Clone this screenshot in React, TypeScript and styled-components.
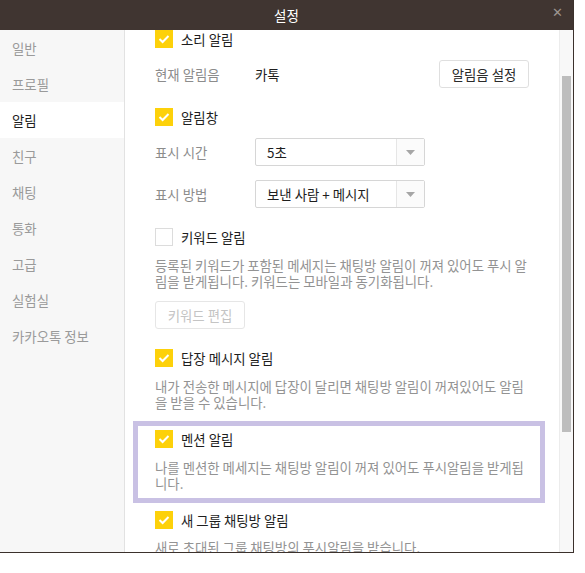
import styled, { createGlobalStyle } from 'styled-components';

const GlobalStyle = createGlobalStyle`
    html, body {
        margin: 0;
        background: #ffffff;
    }
    body {
        font-family: 'Noto Sans CJK KR', 'Noto Sans', sans-serif;
        font-size: 13.4px;
        color: #222;
    }
    * {
        box-sizing: border-box;
    }
`;

const MENU = ['일반', '프로필', '알림', '친구', '채팅', '통화', '고급', '실험실', '카카오톡 정보'];

function CheckIcon() {
    return (
        <svg width="12" height="10" viewBox="0 0 12 10">
            <polyline points="1.5,5 4.6,8 10.5,2" fill="none" stroke="#fff" strokeWidth="2" />
        </svg>
    );
}

function Caret() {
    return (
        <svg width="9" height="5" viewBox="0 0 9 5">
            <polygon points="0,0 9,0 4.5,5" fill="#a6a6a6" />
        </svg>
    );
}

function CheckRow({ checked, label }: { checked: boolean; label: string }) {
    return (
        <CheckLine>
            <Box checked={checked}>{checked && <CheckIcon />}</Box>
            <CheckLabel>{label}</CheckLabel>
        </CheckLine>
    );
}

function Select({ value }: { value: string }) {
    return (
        <SelectBox>
            <SelectValue>{value}</SelectValue>
            <SelectArrow>
                <Caret />
            </SelectArrow>
        </SelectBox>
    );
}

export default function App() {
    const active = '알림';

    return (
        <>
            <GlobalStyle />
            <Window>
                <TitleBar>
                    <Title>설정</Title>
                    <Close>✕</Close>
                </TitleBar>
                <Body>
                    <Sidebar>
                        {MENU.map(m => (
                            <MenuItem key={m} active={m === active}>
                                {m}
                            </MenuItem>
                        ))}
                    </Sidebar>
                    <Content>
                        <Inner>
                            <Section>
                                <CheckRow checked label="소리 알림" />
                                <FieldRow>
                                    <FieldLabel>현재 알림음</FieldLabel>
                                    <FieldValue>카톡</FieldValue>
                                    <Button>알림음 설정</Button>
                                </FieldRow>
                            </Section>

                            <Section>
                                <CheckRow checked label="알림창" />
                                <FieldRow>
                                    <FieldLabel>표시 시간</FieldLabel>
                                    <Select value="5초" />
                                </FieldRow>
                                <FieldRow spaced>
                                    <FieldLabel>표시 방법</FieldLabel>
                                    <Select value="보낸 사람 + 메시지" />
                                </FieldRow>
                            </Section>

                            <Section>
                                <CheckRow checked={false} label="키워드 알림" />
                                <Description>
                                    등록된 키워드가 포함된 메세지는 채팅방 알림이 꺼져 있어도 푸시 알림을 받게됩니다. 키워드는 모바일과 동기화됩니다.
                                </Description>
                                <ButtonRow>
                                    <Button disabled>키워드 편집</Button>
                                </ButtonRow>
                            </Section>

                            <Section>
                                <CheckRow checked label="답장 메시지 알림" />
                                <Description>
                                    내가 전송한 메시지에 답장이 달리면 채팅방 알림이 꺼져있어도 알림을 받을 수 있습니다.
                                </Description>
                            </Section>

                            <Section highlighted>
                                <CheckRow checked label="멘션 알림" />
                                <Description>
                                    나를 멘션한 메세지는 채팅방 알림이 꺼져 있어도 푸시알림을 받게됩니다.
                                </Description>
                            </Section>

                            <Section>
                                <CheckRow checked label="새 그룹 채팅방 알림" />
                                <Description tight>새로 초대된 그룹 채팅방의 푸시알림을 받습니다.</Description>
                            </Section>
                        </Inner>
                    </Content>
                    <Track>
                        <Thumb />
                    </Track>
                </Body>
            </Window>
        </>
    );
}

// Styled components
const Window = styled.div`
    width: 574px;
    height: 553px;
    display: flex;
    flex-direction: column;
    border-right: 1px solid #3b312c;
    border-bottom: 1px solid #3b312c;
    box-shadow: 0 2px 0 #e4e4e4;
    background: #fff;
`;

const TitleBar = styled.div`
    height: 30px;
    flex: none;
    background: #403531;
    display: flex;
    align-items: center;
    justify-content: center;
    position: relative;
`;

const Title = styled.div`
    color: #fff;
    font-size: 13.5px;
`;

const Close = styled.div`
    position: absolute;
    right: 10px;
    top: 5px;
    color: #9c948f;
    font-size: 13px;
    font-weight: bold;
    font-family: 'DejaVu Sans', sans-serif;
`;

const Body = styled.div`
    flex: 1;
    display: flex;
    min-height: 0;
`;

const Sidebar = styled.div`
    width: 125px;
    flex: none;
    background: #f7f7f7;
    border-right: 1px solid #e2e2e2;
`;

const MenuItem = styled.div<{ active?: boolean }>`
    height: 36px;
    display: flex;
    align-items: center;
    padding-left: 12px;
    color: ${({ active }) => (active ? '#1e1e1e' : '#9a9a9a')};
    background: ${({ active }) => (active ? '#fff' : 'transparent')};
`;

const Content = styled.div`
    flex: 1;
    overflow: hidden;
`;

const Inner = styled.div`
    padding: 0 30px;
    display: flex;
    flex-direction: column;
    gap: 20px;
`;

const Section = styled.div<{ highlighted?: boolean }>`
    position: relative;
    display: flex;
    flex-direction: column;
    &::after {
        content: '';
        display: ${({ highlighted }) => (highlighted ? 'block' : 'none')};
        position: absolute;
        top: -9px;
        left: -22px;
        right: -16px;
        bottom: -12px;
        border: 5px solid #c9c1e4;
        pointer-events: none;
    }
`;

const CheckLine = styled.div`
    display: flex;
    align-items: center;
    height: 18px;
    gap: 8px;
`;

const Box = styled.div<{ checked: boolean }>`
    width: 18px;
    height: 18px;
    display: flex;
    align-items: center;
    justify-content: center;
    background: ${({ checked }) => (checked ? '#fdd10a' : '#fff')};
    border: ${({ checked }) => (checked ? 'none' : '1px solid #dcdcdc')};
`;

const CheckLabel = styled.span`
    color: #1e1e1e;
`;

const FieldRow = styled.div<{ spaced?: boolean }>`
    display: flex;
    align-items: center;
    height: 28px;
    margin-top: ${({ spaced }) => (spaced ? '14px' : '12px')};
`;

const FieldLabel = styled.span`
    width: 100px;
    color: #8c8c8c;
`;

const FieldValue = styled.span`
    flex: 1;
    color: #1e1e1e;
`;

const Button = styled.button`
    height: 28px;
    width: 90px;
    padding: 0;
    background: #fff;
    border: 1px solid #dfdfdf;
    border-radius: 3px;
    font-family: inherit;
    font-size: 13.4px;
    color: #2a2a2a;
    &:disabled {
        color: #c4c4c4;
        border-color: #e6e6e6;
    }
`;

const ButtonRow = styled.div`
    display: flex;
    margin-top: 12px;
`;

const SelectBox = styled.div`
    width: 170px;
    height: 28px;
    display: flex;
    border: 1px solid #d6d6d6;
    border-radius: 2px;
    background: #fff;
`;

const SelectValue = styled.div`
    flex: 1;
    display: flex;
    align-items: center;
    padding-left: 11px;
    color: #1e1e1e;
`;

const SelectArrow = styled.div`
    width: 28px;
    display: flex;
    align-items: center;
    justify-content: center;
    border-left: 1px solid #e6e6e6;
    background: #fbfbfb;
`;

const Description = styled.p<{ tight?: boolean }>`
    margin: ${({ tight }) => (tight ? '10px' : '11px')} 0 0;
    line-height: 16px;
    color: #939393;
`;

const Track = styled.div`
    width: 14px;
    flex: none;
    background: #f8f8f8;
    border-left: 1px solid #ececec;
    padding-left: 2px;
`;

const Thumb = styled.div`
    width: 9px;
    height: 356px;
    margin-top: 46px;
    background: #bdbdbd;
`;
